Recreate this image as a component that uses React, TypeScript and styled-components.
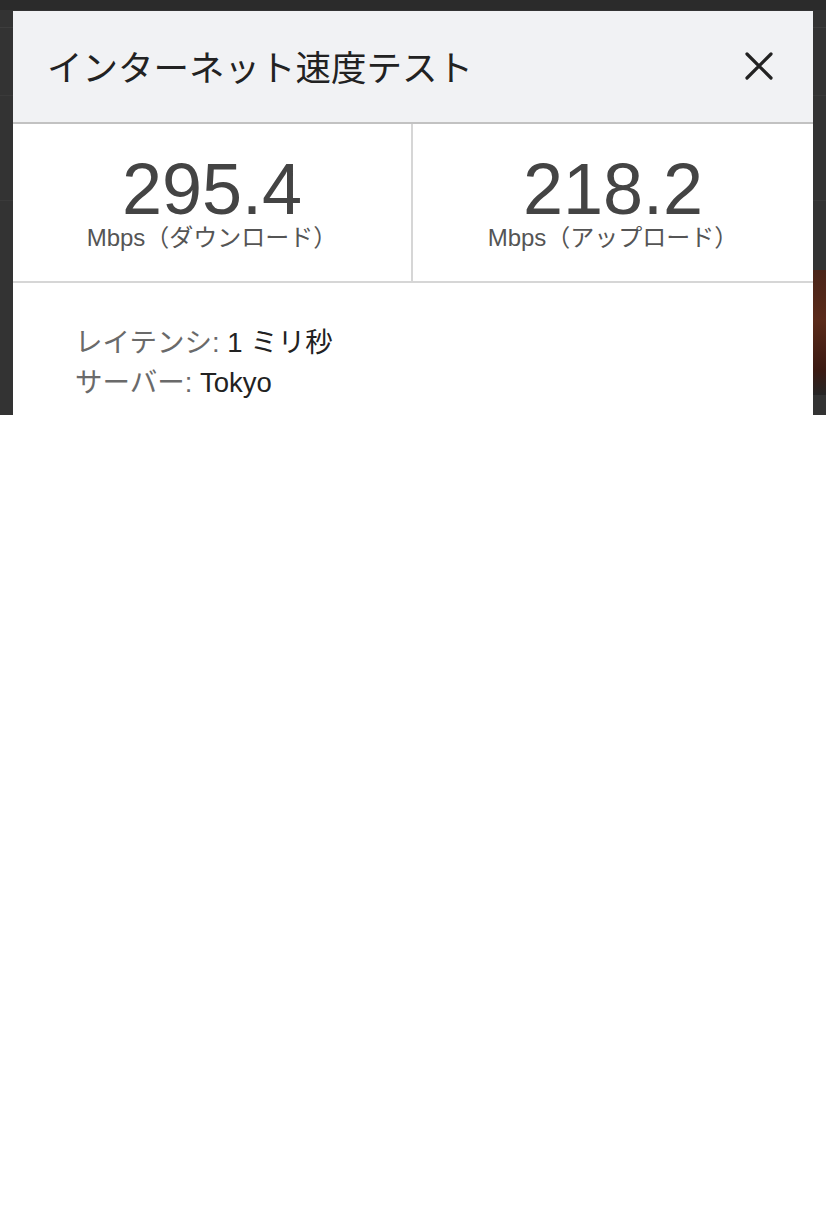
import styled, { createGlobalStyle } from "styled-components";

const GlobalStyle = createGlobalStyle`
  html, body {
    margin: 0;
    padding: 0;
    background: #ffffff;
  }
  * {
    box-sizing: border-box;
  }
`;

const Backdrop = styled.div`
  height: 415px;
  overflow: hidden;
  display: flex;
  flex-direction: column;
  padding: 11px 13px 0;
  background-color: #333333;
  background-image:
    linear-gradient(#2b2b2b, #2b2b2b),
    linear-gradient(#3d3d3d, #3d3d3d),
    linear-gradient(#3a3a3a, #3a3a3a),
    linear-gradient(#3a3a3a, #3a3a3a),
    linear-gradient(180deg, #4a2418 0%, #5a2a1a 40%, #3b1a12 80%, #262626 100%);
  background-repeat: no-repeat;
  background-size:
    100% 10px,
    100% 1px,
    100% 1px,
    100% 1px,
    13px 125px;
  background-position:
    0 0,
    0 27px,
    0 95px,
    0 200px,
    813px 270px;
`;

const Dialog = styled.div`
  width: 800px;
  flex: 1 0 auto;
  background: #ffffff;
  font-family: "Liberation Sans", "Noto Sans CJK JP", sans-serif;
`;

const Header = styled.header`
  height: 113px;
  display: flex;
  align-items: center;
  justify-content: space-between;
  padding: 0 38px 2px 34px;
  background: #f1f2f4;
  border-bottom: 2px solid #c2c2c2;
`;

const Title = styled.h1`
  margin: 0;
  font-family: "Noto Sans CJK JP", sans-serif;
  font-size: 35.5px;
  font-weight: 400;
  color: #222222;
  line-height: 1;
`;

const CloseButton = styled.button`
  width: 32px;
  height: 32px;
  padding: 0;
  border: none;
  background: none;
  display: flex;
  align-items: center;
  justify-content: center;
  cursor: pointer;
`;

const Stats = styled.div`
  display: grid;
  grid-template-columns: 1fr 1fr;
  border-bottom: 2px solid #d6d6d6;
`;

const StatCell = styled.div<{ $divider?: boolean }>`
  height: 157px;
  display: flex;
  flex-direction: column;
  align-items: center;
  padding-top: 30px;
  border-right: ${(p) => (p.$divider ? "2px solid #d6d6d6" : "none")};
`;

const Value = styled.div`
  font-family: "Liberation Sans", sans-serif;
  font-size: 72px;
  line-height: 70px;
  color: #444444;
`;

const Unit = styled.div`
  font-size: 24px;
  line-height: 28px;
  color: #555555;
`;

const Details = styled.div`
  padding: 40px 62px 0;
`;

const DetailRow = styled.div`
  font-size: 27.5px;
  line-height: 40px;
  color: #222222;
`;

const DetailLabel = styled.span`
  color: #6a6a6a;
`;

function CloseIcon() {
  return (
    <svg width="30" height="30" viewBox="0 0 30 30">
      <path
        d="M3 3 L27 27 M27 3 L3 27"
        stroke="#222222"
        strokeWidth="3.2"
        strokeLinecap="round"
      />
    </svg>
  );
}

const results = [
  { value: "295.4", unit: "Mbps（ダウンロード）" },
  { value: "218.2", unit: "Mbps（アップロード）" },
];

export default function App() {
  return (
    <>
      <GlobalStyle />
      <Backdrop>
        <Dialog>
          <Header>
            <Title>インターネット速度テスト</Title>
            <CloseButton aria-label="閉じる">
              <CloseIcon />
            </CloseButton>
          </Header>
          <Stats>
            {results.map((r, i) => (
              <StatCell key={r.unit} $divider={i === 0}>
                <Value>{r.value}</Value>
                <Unit>{r.unit}</Unit>
              </StatCell>
            ))}
          </Stats>
          <Details>
            <DetailRow>
              <DetailLabel>レイテンシ: </DetailLabel>1 ミリ秒
            </DetailRow>
            <DetailRow>
              <DetailLabel>サーバー: </DetailLabel>Tokyo
            </DetailRow>
          </Details>
        </Dialog>
      </Backdrop>
    </>
  );
}
